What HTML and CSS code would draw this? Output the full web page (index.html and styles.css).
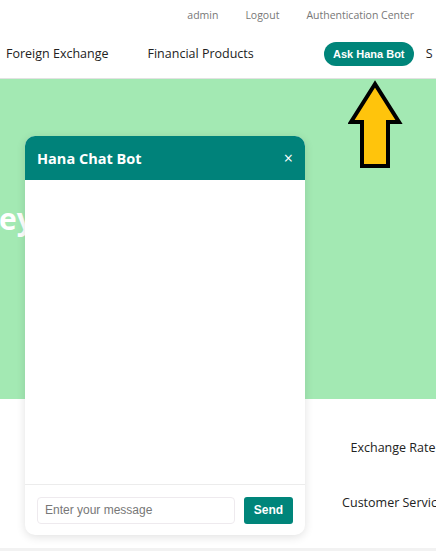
FILE: index.html
```html
<!DOCTYPE html>
<html lang="en">
<head>
<meta charset="utf-8">
<title>Hana Bank</title>
<link rel="stylesheet" href="styles.css">
</head>
<body>
<div class="page">
  <div class="topbar">
    <a class="toplink">admin</a>
    <a class="toplink">Logout</a>
    <a class="toplink">Authentication Center</a>
  </div>
  <nav class="nav">
    <a class="navlink">Foreign Exchange</a>
    <a class="navlink">Financial Products</a>
    <button class="askbtn">Ask Hana Bot</button>
    <a class="navlink cut">S</a>
  </nav>
  <section class="hero">
    <h1 class="hero-title">ey</h1>
  </section>
  <section class="links">
    <div class="linkcol">
      <a class="quick">Exchange Rate</a>
      <a class="quick">Customer Service</a>
    </div>
  </section>
  <footer class="footer"></footer>

  <svg class="arrow" width="56" height="90" viewBox="0 0 56 90">
    <polygon points="27,4 3,42 14,42 14,86 40,86 40,42 51,42" fill="#ffc40c" stroke="#000" stroke-width="4" stroke-linejoin="miter"/>
  </svg>

  <div class="chat">
    <div class="chat-head">
      <span class="chat-title">Hana Chat Bot</span>
      <span class="chat-close">×</span>
    </div>
    <div class="chat-body"></div>
    <div class="chat-foot">
      <input class="chat-input" type="text" placeholder="Enter your message">
      <button class="sendbtn">Send</button>
    </div>
  </div>
</div>
</body>
</html>
```

FILE: styles.css
```css
* { box-sizing: border-box; }
html, body { margin: 0; padding: 0; }
body {
  width: 436px;
  height: 551px;
  overflow: hidden;
  background: #fff;
  font-family: "Open Sans", "Noto Sans", sans-serif;
}
.page {
  position: relative;
  width: 436px;
  height: 551px;
  overflow: hidden;
  display: flex;
  flex-direction: column;
}
.topbar {
  height: 29px;
  display: flex;
  justify-content: flex-end;
  align-items: center;
  gap: 27px;
  padding-right: 22px;
  font-size: 10.5px;
  color: #777;
}
.nav {
  height: 50px;
  display: flex;
  align-items: center;
  padding-left: 6px;
  border-bottom: 1px solid #e2e2e2;
  white-space: nowrap;
}
.navlink {
  flex-shrink: 0;
  font-size: 12.5px;
  color: #222;
  margin-right: 39px;
}
.askbtn {
  flex-shrink: 0;
  margin-left: 31px;
  margin-right: 12px;
  height: 24px;
  width: 90px;
  border: none;
  border-radius: 12px;
  background: #00857a;
  color: #fff;
  font-family: "Liberation Sans", Arial, sans-serif;
  font-weight: bold;
  font-size: 11px;
  padding: 0;
}
.navlink.cut { margin-right: 0; }
.hero {
  height: 320px;
  background: #a3e9b3;
  padding-top: 122px;
}
.hero-title {
  margin: 0 0 0 -1px;
  color: #fff;
  font-size: 30px;
  font-weight: 700;
  line-height: 36px;
}
.links {
  height: 149px;
  padding-left: 293px;
}
.linkcol {
  width: 200px;
  display: flex;
  flex-direction: column;
  align-items: center;
  padding-top: 40px;
  gap: 37px;
  white-space: nowrap;
}
.quick {
  font-size: 12.5px;
  color: #222;
  line-height: 18px;
}
.footer {
  flex: 1;
  background: #f2f2f2;
}
.arrow {
  position: absolute;
  left: 348px;
  top: 80px;
}
.chat {
  position: absolute;
  left: 25px;
  top: 136px;
  width: 280px;
  height: 399px;
  background: #fff;
  border-radius: 10px;
  box-shadow: 0 2px 10px rgba(0,0,0,0.12);
  display: flex;
  flex-direction: column;
  overflow: hidden;
}
.chat-head {
  height: 44px;
  background: #00827a;
  display: flex;
  align-items: center;
  justify-content: space-between;
  padding: 0 12px 0 12px;
  color: #fff;
}
.chat-title {
  font-weight: 700;
  font-size: 14.5px;
}
.chat-close {
  font-size: 16px;
  font-weight: 400;
}
.chat-body { flex: 1; }
.chat-foot {
  height: 51px;
  border-top: 1px solid #ececec;
  display: flex;
  align-items: center;
  gap: 9px;
  padding: 0 12px;
}
.chat-input {
  flex: 1;
  height: 27px;
  border: 1px solid #eeeaee;
  border-radius: 4px;
  padding: 0 7px;
  font-family: "Liberation Sans", Arial, sans-serif;
  font-size: 12px;
  color: #333;
  outline: none;
}
.chat-input::placeholder { color: #777; }
.sendbtn {
  width: 49px;
  height: 27px;
  border: none;
  border-radius: 3px;
  background: #00857a;
  color: #fff;
  font-family: "Liberation Sans", Arial, sans-serif;
  font-weight: bold;
  font-size: 12px;
  padding: 0;
}
```
